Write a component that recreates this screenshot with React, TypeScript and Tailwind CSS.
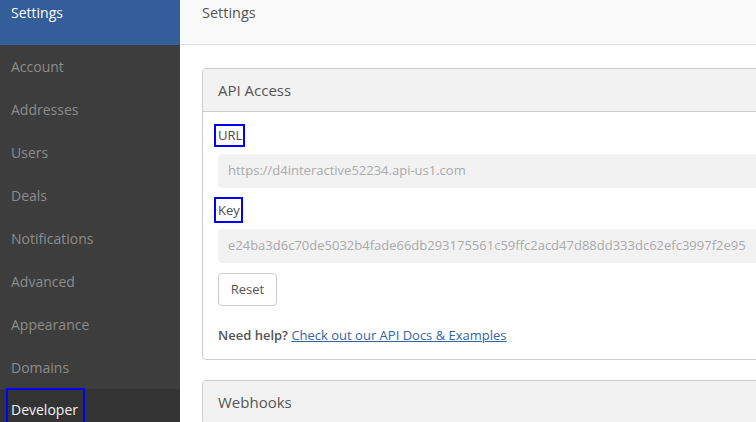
import React from "react";

const items = ["Account", "Addresses", "Users", "Deals", "Notifications", "Advanced", "Appearance", "Domains"];

export default function App() {
  return (
    <div className="flex h-[422px] w-[756px] overflow-hidden bg-white" style={{ fontFamily: '"Open Sans", sans-serif' }}>
      <aside className="flex w-[180px] shrink-0 flex-col overflow-hidden bg-[#3d3d3d]">
        <div className="flex h-[45px] shrink-0 items-start bg-[#335e99] pl-[11px] pt-[3px] text-[14px] leading-[20px] text-white">Settings</div>
        {items.map((t) => (
          <div key={t} className="flex h-[43px] shrink-0 items-center pl-[11px] text-[14px] text-[#8c8c8c]">
            {t}
          </div>
        ))}
        <div className="flex h-[43px] shrink-0 items-start bg-[#333333] pl-[11px] text-[14px] text-[#f4f4f4]">
          <span className="-ml-[5px] -mt-[1px] inline-block border-2 border-[#0000ff] pb-[10px] pl-[3px] pr-[5px] pt-[10px] leading-[20px]">Developer</span>
        </div>
      </aside>
      <main className="flex min-w-[620px] flex-1 flex-col">
        <div className="h-[45px] shrink-0 border-b border-[#dddddd] bg-[#f9f9f9] pl-[22px] pt-[3px] text-[14.5px] leading-[20px] text-[#555555]">Settings</div>
        <div className="w-[640px] pl-[22px] pt-[23px]">
          <section className="rounded-[4px] border border-[#cccccc]">
            <div className="flex h-[43px] items-center rounded-t-[4px] border-b border-[#cccccc] bg-[#f2f2f2] pl-[15px] text-[15px] text-[#555555]">API Access</div>
            <div className="flex flex-col items-start pb-[14px] pl-[15px] pt-[12px]">
              <span className="-ml-[4px] inline-block border-2 border-[#0000ff] pl-[2px] pr-[1px] text-[13px] leading-[19px] text-[#4d4d4d]">URL</span>
              <div className="mt-[7px] flex h-[34px] w-full items-center rounded-l-[4px] bg-[#f2f2f2] pl-[10px] text-[13px] text-[#aaaaaa]">https://d4interactive52234.api-us1.com</div>
              <span className="-ml-[4px] mt-[9px] inline-block border-2 border-[#0000ff] pl-[2px] pr-[1px] text-[13px] leading-[22px] text-[#4d4d4d]">Key</span>
              <div className="mt-[6px] flex h-[34px] w-full items-center whitespace-nowrap rounded-l-[4px] bg-[#f2f2f2] pl-[10px] text-[13px] text-[#aaaaaa]">e24ba3d6c70de5032b4fade66db293175561c59ffc2acd47d88dd333dc62efc3997f2e95</div>
              <button className="mt-[10px] h-[33px] w-[59px] rounded-[4px] border border-[#cccccc] bg-white text-[13px] text-[#555555]">Reset</button>
              <p className="mt-[19px] text-[13px] leading-[20px] text-[#555555]">
                <span className="font-semibold">Need help?</span>{" "}
                <a className="text-[#3563a3] underline">Check out our API Docs &amp; Examples</a>
              </p>
            </div>
          </section>
          <section className="mt-[20px] rounded-[4px] border border-[#cccccc]">
            <div className="flex h-[43px] items-center rounded-t-[4px] bg-[#f2f2f2] pl-[15px] text-[15px] text-[#555555]">Webhooks</div>
          </section>
        </div>
      </main>
    </div>
  );
}
